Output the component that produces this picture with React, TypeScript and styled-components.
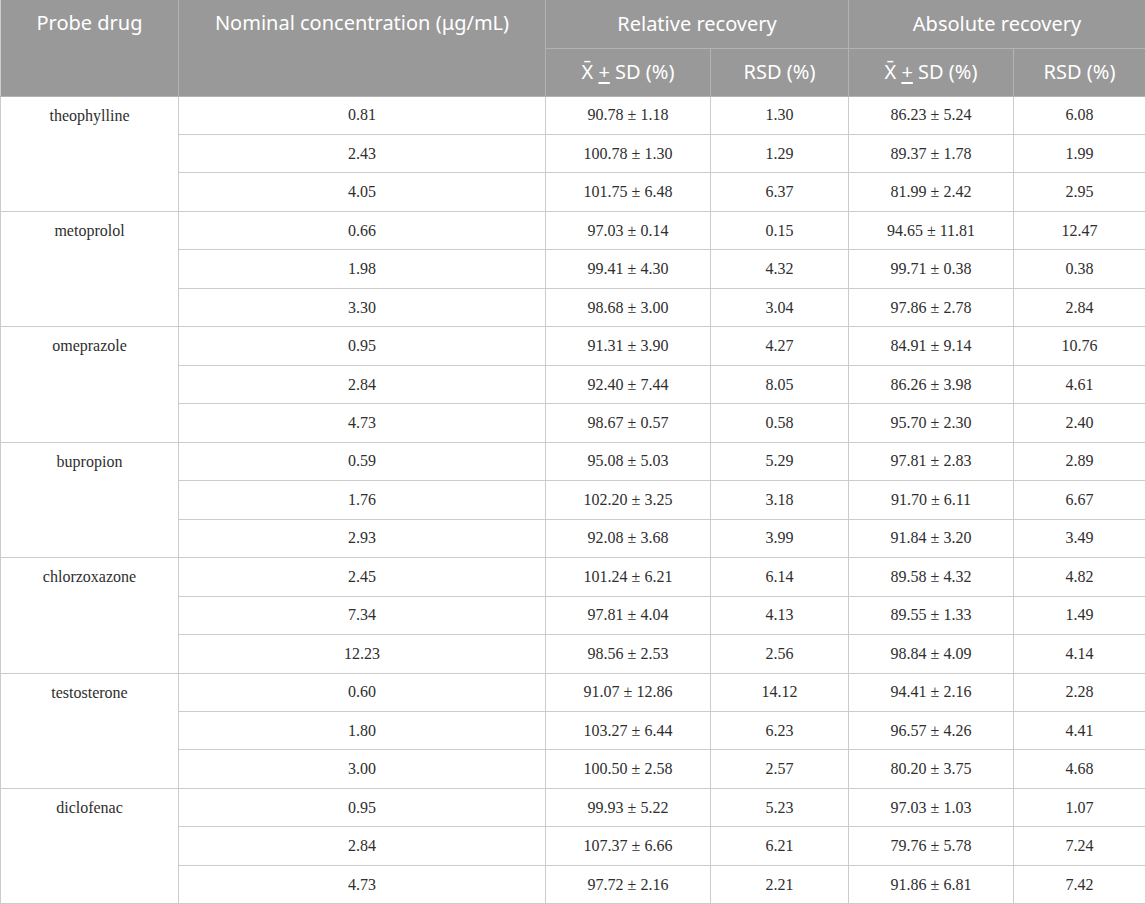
import React from "react";
import styled, { createGlobalStyle } from "styled-components";

const Global = createGlobalStyle`
  html, body { margin: 0; padding: 0; background: #ffffff; }
`;

const Table = styled.table`
  width: 1145px;
  border-collapse: collapse;
  table-layout: fixed;
`;

const Col = styled.col<{ $w: number }>`
  width: ${(p) => p.$w}px;
`;

const HeadRow = styled.tr`
  height: 48px;
`;

const Th = styled.th<{ $top?: boolean }>`
  background: #999999;
  color: #ffffff;
  font-family: "Noto Sans", "Open Sans", sans-serif;
  font-weight: 400;
  font-size: 20px;
  line-height: 26px;
  text-align: center;
  vertical-align: ${(p) => (p.$top ? "top" : "middle")};
  padding: ${(p) => (p.$top ? "10px 4px 0" : "0 4px")};
  border: 1px solid #b3b3b3;
  border-top: none;
  &:first-child { border-left: 1px solid #cccccc; }
  &:last-child { border-right: 1px solid #cccccc; }
`;

const Row = styled.tr`
  height: 38.48px;
`;

const Td = styled.td<{ $top?: boolean }>`
  font-family: "Liberation Serif", "Times New Roman", serif;
  font-size: 16px;
  line-height: 20px;
  color: #2e2e2e;
  text-align: center;
  vertical-align: ${(p) => (p.$top ? "top" : "middle")};
  padding: ${(p) => (p.$top ? "9px 4px 0" : "0 4px")};
  border: 1px solid #cccccc;
`;

const PlusMinus = styled.span`
  text-decoration: underline;
  text-underline-offset: 3px;
`;

type Sample = [string, string, string, string, string];

const data: { drug: string; rows: Sample[] }[] = [
  {
    drug: "theophylline",
    rows: [
      ["0.81", "90.78 ± 1.18", "1.30", "86.23 ± 5.24", "6.08"],
      ["2.43", "100.78 ± 1.30", "1.29", "89.37 ± 1.78", "1.99"],
      ["4.05", "101.75 ± 6.48", "6.37", "81.99 ± 2.42", "2.95"],
    ],
  },
  {
    drug: "metoprolol",
    rows: [
      ["0.66", "97.03 ± 0.14", "0.15", "94.65 ± 11.81", "12.47"],
      ["1.98", "99.41 ± 4.30", "4.32", "99.71 ± 0.38", "0.38"],
      ["3.30", "98.68 ± 3.00", "3.04", "97.86 ± 2.78", "2.84"],
    ],
  },
  {
    drug: "omeprazole",
    rows: [
      ["0.95", "91.31 ± 3.90", "4.27", "84.91 ± 9.14", "10.76"],
      ["2.84", "92.40 ± 7.44", "8.05", "86.26 ± 3.98", "4.61"],
      ["4.73", "98.67 ± 0.57", "0.58", "95.70 ± 2.30", "2.40"],
    ],
  },
  {
    drug: "bupropion",
    rows: [
      ["0.59", "95.08 ± 5.03", "5.29", "97.81 ± 2.83", "2.89"],
      ["1.76", "102.20 ± 3.25", "3.18", "91.70 ± 6.11", "6.67"],
      ["2.93", "92.08 ± 3.68", "3.99", "91.84 ± 3.20", "3.49"],
    ],
  },
  {
    drug: "chlorzoxazone",
    rows: [
      ["2.45", "101.24 ± 6.21", "6.14", "89.58 ± 4.32", "4.82"],
      ["7.34", "97.81 ± 4.04", "4.13", "89.55 ± 1.33", "1.49"],
      ["12.23", "98.56 ± 2.53", "2.56", "98.84 ± 4.09", "4.14"],
    ],
  },
  {
    drug: "testosterone",
    rows: [
      ["0.60", "91.07 ± 12.86", "14.12", "94.41 ± 2.16", "2.28"],
      ["1.80", "103.27 ± 6.44", "6.23", "96.57 ± 4.26", "4.41"],
      ["3.00", "100.50 ± 2.58", "2.57", "80.20 ± 3.75", "4.68"],
    ],
  },
  {
    drug: "diclofenac",
    rows: [
      ["0.95", "99.93 ± 5.22", "5.23", "97.03 ± 1.03", "1.07"],
      ["2.84", "107.37 ± 6.66", "6.21", "79.76 ± 5.78", "7.24"],
      ["4.73", "97.72 ± 2.16", "2.21", "91.86 ± 6.81", "7.42"],
    ],
  },
];

const MeanSd = () => (
  <>
    X̄ <PlusMinus>+</PlusMinus> SD (%)
  </>
);

export default function App() {
  return (
    <>
      <Global />
      <Table>
        <colgroup>
          <Col $w={178} />
          <Col $w={367} />
          <Col $w={165} />
          <Col $w={138} />
          <Col $w={165} />
          <Col $w={132} />
        </colgroup>
        <thead>
          <HeadRow>
            <Th rowSpan={2} $top>
              Probe drug
            </Th>
            <Th rowSpan={2} $top>
              Nominal concentration (μg/mL)
            </Th>
            <Th colSpan={2}>Relative recovery</Th>
            <Th colSpan={2}>Absolute recovery</Th>
          </HeadRow>
          <HeadRow>
            <Th>
              <MeanSd />
            </Th>
            <Th>RSD (%)</Th>
            <Th>
              <MeanSd />
            </Th>
            <Th>RSD (%)</Th>
          </HeadRow>
        </thead>
        <tbody>
          {data.map((g) =>
            g.rows.map((r, i) => (
              <Row key={g.drug + i}>
                {i === 0 && (
                  <Td rowSpan={3} $top>
                    {g.drug}
                  </Td>
                )}
                {r.map((v, j) => (
                  <Td key={j}>{v}</Td>
                ))}
              </Row>
            ))
          )}
        </tbody>
      </Table>
    </>
  );
}
